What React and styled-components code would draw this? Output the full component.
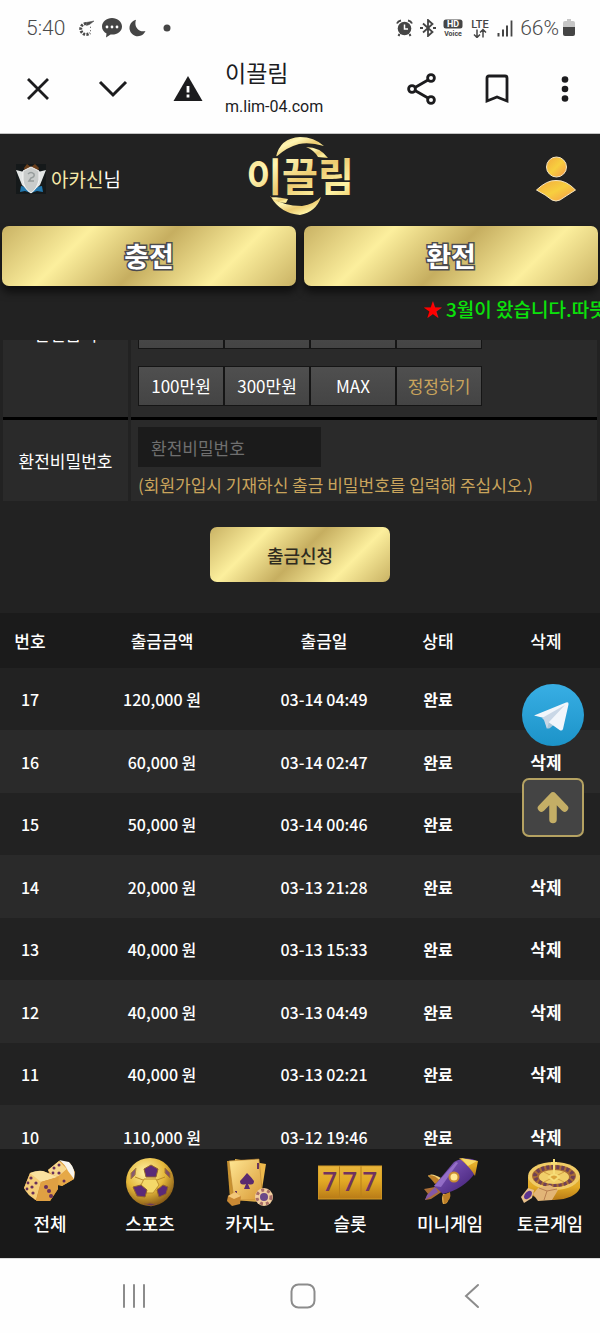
import React, { useLayoutEffect, useRef } from "react";
import styled, { createGlobalStyle, css } from "styled-components";

const sans = `"Noto Sans CJK KR", "Noto Sans", sans-serif`;
const ui = `Roboto, "Noto Sans CJK KR", sans-serif`;
const gold = `linear-gradient(135deg, #c9b264 0%, #fcef9d 26%, #c6ae60 50%, #fcef9d 75%, #c9b264 100%)`;

const Global = createGlobalStyle`
  *, *::before, *::after { box-sizing: border-box; }
  body { margin: 0; background: #222; font-family: ${sans}; }
  button, input { font-family: inherit; }
  button { margin: 0; padding: 0; border: 0; background: none; color: inherit; cursor: pointer; }
  a { color: inherit; text-decoration: none; }
  svg { display: block; flex: none; }
`;

const Screen = styled.div`
  display: flex;
  flex-direction: column;
  height: 100vh;
  overflow: hidden;
  background: #222;
  color: #fff;
`;

/* ---------- phone chrome ---------- */
const StatusBar = styled.div`
  display: flex;
  align-items: center;
  justify-content: space-between;
  flex: none;
  height: 56px;
  padding: 0 25px 0 26px;
  background: #fefefe;
  color: #4a4a4a;
  font: 400 21px/24px ${ui};
`;
const StatusGroup = styled.div`
  display: flex;
  align-items: center;
  gap: ${(p) => p.$gap}px;
`;
const Light = styled.span`
  font-weight: 300;
  -webkit-text-stroke: 0;
`;
const BrowserBar = styled.header`
  display: flex;
  align-items: center;
  flex: none;
  height: 78px;
  padding: 0 4px 12px 0;
  background: #fefefe;
  color: #1c1c1e;
  border-bottom: 1px solid #c4c4c4;
`;
const BarButton = styled.button`
  display: grid;
  place-items: center;
  flex: none;
  width: ${(p) => p.$width || 75}px;
  height: 48px;
`;
const PageTitle = styled.div`
  flex: 1;
  min-width: 0;
  font-family: ${ui};
`;
const TitleText = styled.div`
  font-size: 23px;
  line-height: 32px;
`;
const TitleUrl = styled.div`
  font-size: 16px;
  line-height: 24px;
  padding-top: 4px;
`;
const SystemNav = styled.nav`
  display: grid;
  grid-template-columns: repeat(3, 1fr);
  place-items: center;
  flex: none;
  height: 75px;
  padding: 0 44px 0 50px;
  background: #fefefe;
  color: #8c8c8c;
  border-top: 1px solid #dcdcdc;
`;

/* ---------- site header ---------- */
const SiteHeader = styled.header`
  display: grid;
  grid-template-columns: 1fr auto 1fr;
  align-items: center;
  flex: none;
  height: 90px;
  padding: 0 24px 0 16px;
`;
const Member = styled.div`
  display: flex;
  align-items: center;
  gap: 5px;
  font-size: 19px;
  line-height: 28px;
  font-weight: 400;
`;
const MemberName = styled.span`
  color: #f6e9a8;
`;
const LogoLink = styled.a`
  padding-left: 8px;
`;
const ProfileButton = styled.button`
  justify-self: end;
`;
const CashActions = styled.div`
  display: flex;
  gap: 8px;
  flex: none;
  padding: 2px 2px 0;
`;
const GoldButton = styled.button`
  border-radius: 7px;
  background: ${gold};
  ${(p) =>
    p.$large
      ? css`
          flex: 1;
          height: 60px;
          color: #fff;
          font-size: 27px;
          font-weight: 700;
          line-height: 32px;
          -webkit-text-stroke: 3px #4b4b50;
          paint-order: stroke fill;
          box-shadow: 0 6px 9px rgba(0, 0, 0, 0.6);
        `
      : css`
          width: 180px;
          height: 55px;
          color: #2e2b20;
          font-size: 18px;
          font-weight: 500;
        `}
`;
const Ticker = styled.div`
  flex: none;
  height: 54px;
  padding: 9px 0 0 423px;
  overflow: hidden;
  white-space: nowrap;
  color: #0be20b;
  font-size: 19px;
  font-weight: 500;
  line-height: 28px;
`;
const Star = styled.span`
  color: #f00;
  margin-right: 4px;
`;

/* ---------- scrolling content ---------- */
const Content = styled.main`
  flex: 1;
  min-height: 0;
  overflow-y: auto;
  scrollbar-width: none;
`;
const FormRow = styled.div`
  display: grid;
  grid-template-columns: 125px 1fr;
  gap: 3px;
  padding: 0 3px;
`;
const FormLabel = styled.label`
  display: grid;
  place-items: center;
  background: #2a2a2a;
  font-size: 17px;
  line-height: 24px;
  border-bottom: ${(p) => (p.$ruled ? 3 : 0)}px solid #000;
`;
const FormField = styled.div`
  display: flex;
  flex-direction: column;
  justify-content: flex-end;
  height: ${(p) => (p.$ruled ? 169 : 81)}px;
  padding: ${(p) => (p.$ruled ? "0 7px 11px" : "0 7px 2px")};
  background: #2a2a2a;
  border-bottom: ${(p) => (p.$ruled ? 3 : 0)}px solid #000;
`;
const AmountGrid = styled.div`
  display: grid;
  grid-template-columns: repeat(4, 86px);
  row-gap: 17px;
`;
const AmountButton = styled.button`
  height: 40px;
  border: 1px solid #151515;
  background: linear-gradient(#4f4f4f, #444);
  color: ${(p) => (p.$accent ? "#c9a45c" : "#fff")};
  font-size: 17px;
  line-height: 24px;
`;
const PasswordInput = styled.input`
  width: 183px;
  height: 40px;
  padding: 0 13px;
  border: 0;
  border-radius: 0;
  background: #1b1b1b;
  color: #fff;
  font-size: 17px;
  &::placeholder {
    color: #6f6f6f;
    opacity: 1;
  }
`;
const Hint = styled.p`
  margin: 0;
  padding-top: 4px;
  color: #c9a45c;
  font-size: 17px;
  line-height: 28px;
  white-space: nowrap;
`;
const SubmitRow = styled.div`
  display: flex;
  justify-content: center;
  padding: 26px 0 31px;
`;
const History = styled.table`
  width: 100%;
  table-layout: fixed;
  border-collapse: collapse;
  font-size: 16px;
  font-weight: 500;
  line-height: 24px;
  text-align: center;
`;
const HeadCell = styled.th`
  width: ${(p) => p.$width};
  height: 55px;
  padding: 0;
  background: #1b1b1b;
  font-size: 17px;
  font-weight: 500;
`;
const Row = styled.tr`
  height: 62px;
  background: #222;
  &:nth-child(even) {
    height: 63px;
    background: #2a2a2a;
  }
`;
const Cell = styled.td`
  padding: 0;
  font-weight: ${(p) => (p.$strong ? 700 : 500)};
`;
const DeleteButton = styled.button`
  font-size: 17px;
  font-weight: 700;
  line-height: 24px;
`;

/* ---------- floating buttons ---------- */
const SiteBody = styled.div`
  position: relative;
  display: flex;
  flex: 1;
  flex-direction: column;
  min-height: 0;
`;
const Floating = styled.div`
  position: absolute;
  bottom: 312px;
  right: 16px;
  display: flex;
  flex-direction: column;
  gap: 32px;
`;
const TopButton = styled.button`
  display: grid;
  place-items: center;
  width: 62px;
  height: 59px;
  border: 2px solid #b5a262;
  border-radius: 7px;
  background: #444;
`;

/* ---------- game tabs ---------- */
const GameNav = styled.nav`
  display: grid;
  grid-template-columns: repeat(6, 1fr);
  flex: none;
  height: 109px;
  padding-top: 8px;
  background: #191919;
`;
const GameLink = styled.a`
  display: flex;
  flex-direction: column;
  align-items: center;
  gap: 2px;
  font-size: 18px;
  font-weight: 500;
  line-height: 28px;
  white-space: nowrap;
`;

/* ---------- icons ---------- */
const GestureIcon = () => (
  <svg width="18" height="18" viewBox="0 0 18 18" fill="none" stroke="#4a4a4a">
    <path d="M9 4.5A5.5 5.5 0 1 0 13 14" strokeWidth="3" strokeDasharray="2.2 1.2" />
    <path d="M9 3.5 17 2 12.5 5.5 9.5 6.5Z" fill="#4a4a4a" strokeWidth=".5" />
    <path d="M13 8.5l1-.5M13 11.5l1 .5" />
  </svg>
);
const ChatIcon = () => (
  <svg width="20" height="20" viewBox="0 0 20 20" fill="#454545">
    <path d="M10 0C4.500 0 0 3.700 0 8.500c0 3 1.700 5.500 4.500 7.100L4 19.500l4.600-3c6.500.6 11.400-3 11.400-8C20 3.700 15.500 0 10 0Z" />
    <g fill="#fff"><circle cx="5" cy="9" r="1.400" /><circle cx="10" cy="9" r="1.400" /><circle cx="15" cy="9" r="1.400" /></g>
  </svg>
);
const MoonIcon = () => (
  <svg width="17" height="18" viewBox="0 0 17 18" fill="#454545">
    <path d="M7 .8A8.300 8.300 0 1 0 16.500 12C10 14 4.500 7.500 7 .8Z" />
  </svg>
);
const AlarmIcon = () => (
  <svg width="17" height="18" viewBox="0 0 17 18" fill="none" stroke="#454545">
    <circle cx="8.500" cy="9.500" r="6.800" fill="#454545" stroke="none" />
    <path d="M8.500 5.500v4.500h3.500" stroke="#fff" strokeWidth="1.500" />
    <path d="M1 4.500Q2 2 5 1.500M16 4.500Q15 2 12 1.500M3.500 15l-1 2M13.500 15l1 2" strokeWidth="2" />
  </svg>
);
const BluetoothIcon = () => (
  <svg width="16" height="18" viewBox="0 0 16 18" fill="none" stroke="#454545" strokeWidth="1.800">
    <path d="M3 4.500 12.500 13 8 17V1l4.500 4L3 13.500" />
    <path d="M0 9h3M13 9h3" strokeWidth="2.200" />
  </svg>
);
const VoiceIcon = () => (
  <svg width="20" height="18" viewBox="0 0 20 18" fontFamily="Roboto, sans-serif" fontWeight="700" textAnchor="middle">
    <rect x="0.500" y="0.500" width="19" height="9" rx="2.500" fill="#454545" />
    <text x="10" y="8" fontSize="9" fill="#fff">HD</text>
    <text x="10" y="17" fontSize="7" fill="#454545">Voice</text>
  </svg>
);
const LteIcon = () => (
  <svg width="20" height="19" viewBox="0 0 20 19" fill="#454545" fontFamily="Roboto, sans-serif" textAnchor="middle">
    <text x="10" y="8.500" fontSize="11" fontWeight="500">LTE</text>
    <path d="M7 10.500v8M4 15.500 7 18.500 10 15.500M13 18.500v-8M10 13.500 13 10.500l3 3" fill="none" stroke="#454545" strokeWidth="1.500" />
  </svg>
);
const SignalIcon = () => (
  <svg width="16" height="17" viewBox="0 0 16 17" stroke="#454545" strokeWidth="2">
    <path d="M1.500 13v3.500M6 9.500v7M10 5.500v11" />
    <path d="M14.500.5v16" strokeWidth="1.800" />
  </svg>
);
const BatteryIcon = () => (
  <svg width="12" height="18" viewBox="0 0 12 18">
    <path d="M4 0h4v2h2q2 0 2 2v5H0V4q0-2 2-2h2Z" fill="#c6c6c6" />
    <path d="M0 8h12v7q0 2-2 2H2q-2 0-2-2Z" fill="#454545" />
  </svg>
);
const CloseIcon = () => (
  <svg width="24" height="24" viewBox="0 0 24 24" fill="none" stroke="currentColor" strokeWidth="2.800">
    <path d="M2 2 22 22M22 2 2 22" />
  </svg>
);
const DownIcon = () => (
  <svg width="30" height="18" viewBox="0 0 30 18" fill="none" stroke="currentColor" strokeWidth="3">
    <path d="M2 2 15 15 28 2" />
  </svg>
);
const WarningIcon = () => (
  <svg width="30" height="26" viewBox="0 0 30 26">
    <path d="M15 0 29.500 25H.5Z" fill="currentColor" />
    <path d="M15 10v6.500M15 18.500v3" stroke="#fff" strokeWidth="2.800" />
  </svg>
);
const ShareIcon = () => (
  <svg width="30" height="32" viewBox="0 0 30 32" fill="none" stroke="currentColor" strokeWidth="2.800">
    <path d="M8 14.500 21 7M8 17.500 21 25" />
    <circle cx="5" cy="16" r="3.400" /><circle cx="24" cy="5" r="3.400" /><circle cx="24" cy="27" r="3.400" />
  </svg>
);
const BookmarkIcon = () => (
  <svg width="24" height="30" viewBox="0 0 24 30" fill="none" stroke="currentColor" strokeWidth="2.800">
    <path d="M2 27V4q0-2 2-2h16q2 0 2 2v23L12 23Z" />
  </svg>
);
const MoreIcon = () => (
  <svg width="8" height="28" viewBox="0 0 8 28" fill="currentColor">
    <circle cx="4" cy="4.500" r="3.300" /><circle cx="4" cy="14" r="3.300" /><circle cx="4" cy="23.500" r="3.300" />
  </svg>
);
const ShieldBadge = () => (
  <svg width="30" height="30" viewBox="0 0 30 30">
    <rect width="30" height="30" fill="#15191a" />
    <path d="M8 4 11 0l4 3 4-3 4 4-2 5H9Z" fill="#6a3f1c" />
    <path d="M5 22l5 1 5 3 5-3 6-1 1 6-6-1-6 2-6-2-5 1Z" fill="#2277ad" />
    <path d="M0 6 8 8 15 29 6 21ZM30 6l-8 2-7 21 9-8Z" fill="#e2e5e4" />
    <path d="M15 3 23 7v9q-2 9-8 13Q8 25 7 16V7Z" fill="#c9cccb" stroke="#f4f4f4" />
    <path d="M12 10q3-3 6 0 1 3-3 4l-2 3h5" fill="none" stroke="#969c9c" strokeWidth="1.500" />
  </svg>
);
const Logo = () => (
  <svg width="108" height="84" viewBox="0 4 108 84" role="img" aria-label="이끌림">
    <defs>
      <linearGradient id="logoGold" x1="0" y1="0" x2="1" y2="1">
        <stop offset="0" stopColor="#f0cf72" /><stop offset=".3" stopColor="#fff6b4" />
        <stop offset=".55" stopColor="#eccb70" /><stop offset=".8" stopColor="#fff4a6" /><stop offset="1" stopColor="#e9c65c" />
      </linearGradient>
    </defs>
    <g fill="url(#logoGold)">
      <path d="M30 24Q34 5 54 4 68 4 78 13 64 9 53 11 41 14 30 24Z" />
      <path d="M60 14Q74 14 82 25L72 24Q68 17 60 14Z" />
      <path d="M25 64Q37 73 56 73 68 71 75 64 70 79 54 82 34 80 25 64Z" />
      <path d="M24 63 42 66 40 70Q30 70 24 63Z" />
    </g>
    <text x="54" y="58" textAnchor="middle" fontFamily='"Noto Sans CJK KR", sans-serif' fontSize="39" fontWeight="700"
      fill="url(#logoGold)" stroke="#222" strokeWidth="4" paintOrder="stroke">이끌림</text>
  </svg>
);
const ProfileIcon = () => (
  <svg width="40" height="46" viewBox="0 0 40 46">
    <defs>
      <linearGradient id="person" x1="0" y1="0" x2="1" y2="1">
        <stop offset="0" stopColor="#f3a83e" /><stop offset=".5" stopColor="#f7cf3f" /><stop offset="1" stopColor="#f5954a" />
      </linearGradient>
    </defs>
    <g fill="url(#person)" stroke="#f6e6c2" strokeWidth="1">
      <circle cx="20.500" cy="11" r="10" />
      <path d="M.5 34Q11 24 20 24.500 30 24 39.500 34 30 40 24 44q-4 2-8 0Q10 39 .5 34Z" />
    </g>
  </svg>
);
const TelegramIcon = () => (
  <svg width="62" height="62" viewBox="0 0 62 62">
    <defs>
      <linearGradient id="tg" x1="0" y1="0" x2="0" y2="1">
        <stop offset="0" stopColor="#38aee4" /><stop offset="1" stopColor="#1c93c8" />
      </linearGradient>
    </defs>
    <circle cx="31" cy="31" r="31" fill="url(#tg)" />
    <path d="M22 34 25 44q1 1 3 0l6-5Z" fill="#a9c6d8" />
    <path d="M12 31.500 44 18.500q3-1 2.500 2L41 45q-1 2.500-3.500 1L27 38.500 22 34Z" fill="#f2f6fb" />
    <path d="M20 34 43 21 27 38l-2 7-3-9Z" fill="#c9d7e6" />
  </svg>
);
const UpArrowIcon = () => (
  <svg width="32" height="34" viewBox="0 0 32 34" fill="none" stroke="#c4ae66" strokeWidth="7.500" strokeLinecap="round" strokeLinejoin="round">
    <path d="M16 28.500V7M4.500 17 16 5 27.500 17" />
  </svg>
);
const RecentsIcon = () => (
  <svg width="24" height="26" viewBox="0 0 24 26" stroke="currentColor" strokeWidth="2" strokeLinecap="round">
    <path d="M2 2v22M12 2v22M22 2v22" />
  </svg>
);
const HomeIcon = () => (
  <svg width="26" height="26" viewBox="0 0 26 26" fill="none" stroke="currentColor" strokeWidth="2">
    <rect x="1.500" y="1.500" width="23" height="23" rx="7" />
  </svg>
);
const BackIcon = () => (
  <svg width="16" height="26" viewBox="0 0 16 26" fill="none" stroke="currentColor" strokeWidth="2" strokeLinecap="round">
    <path d="M14 2 2 13 14 24" />
  </svg>
);

const iconDefs = (
  <defs>
    <linearGradient id="g1" x1="0" y1="0" x2="1" y2="1"><stop offset="0" stopColor="#ffe794" /><stop offset="1" stopColor="#d99a36" /></linearGradient>
    <linearGradient id="g2" x1="0" y1="0" x2="0" y2="1"><stop offset="0" stopColor="#e8b53c" /><stop offset=".45" stopColor="#e2aa25" /><stop offset="1" stopColor="#b87a17" /></linearGradient>
    <radialGradient id="g3" cx=".4" cy=".3" r=".75"><stop offset="0" stopColor="#fff2a8" /><stop offset=".55" stopColor="#e5b83a" /><stop offset="1" stopColor="#7d5013" /></radialGradient>
    <linearGradient id="g4" x1="0" y1="0" x2="1" y2="1"><stop offset="0" stopColor="#8b62c6" /><stop offset="1" stopColor="#3c1b70" /></linearGradient>
  </defs>
);
const Dice = () => (
  <>
    <path d="M25 13 36 4 47 6 52 15 51 22 39 29 29 27Z" fill="#e0a040" />
    <path d="M25 13 36 4 44 12 36 19 31 20Z" fill="#f8d88e" />
    <path d="M36 19 44 12 51 22 39 29 35 27Z" fill="#e6a947" />
    <path d="M36 3 46 5Q53 12 51 22L45 14Q42 7 36 3Z" fill="#f7f5ee" />
    <path d="M7 16 20 14 35 20 35 32 27 44 12 43 1 31Z" fill="#cf8a33" />
    <path d="M7 16Q13 14 18 25L13 43Q4 38 1 31Z" fill="#f5cd79" />
    <path d="M7 16Q14 13 20 14L35 20 18 25Z" fill="#fae2a0" />
    <path d="M18 25 35 20V32L27 44H13Z" fill="#dfa043" />
    <g fill="#69305b">
      <circle cx="8" cy="21" r="1.600" /><circle cx="13" cy="26" r="1.600" /><circle cx="5" cy="26" r="1.400" /><circle cx="9" cy="30" r="1.600" /><circle cx="4" cy="32" r="1.400" /><circle cx="10" cy="36" r="1.600" />
      <circle cx="23" cy="30" r="2" /><circle cx="26" cy="34" r="2" /><circle cx="28" cy="39" r="2" />
      <circle cx="31" cy="11" r="1.500" /><circle cx="36" cy="8" r="1.500" /><circle cx="30" cy="16" r="1.400" /><circle cx="36" cy="16" r="1.600" /><circle cx="41" cy="24" r="1.500" />
    </g>
  </>
);
const Ball = () => (
  <>
    <circle cx="24" cy="25" r="24" fill="url(#g3)" />
    <path d="M24 18v-6M17 23 9 20M31 23l8-3M20 28l-5 6M29 28l5 6" stroke="#b98a28" fill="none" />
    <path d="M18 22h12l3 6-6 8h-7l-5-8Z" fill="#f4d869" stroke="#bd9030" />
    <g fill="#5b2a77" stroke="#92602b">
      <path d="M18 12 25 8l7 4-2 8H20Z" /><path d="M7 30l8-2 6 5-2 7-8-1Z" /><path d="m31 33 6-5 5 2-2 7-7 3Z" />
      <path d="M5 16 10 11l-1 7-4 4ZM39 11l5 5v5l-5-5ZM18 47l6-1 7 1-6 2Z" opacity=".7" />
    </g>
  </>
);
const Cards = () => (
  <>
    <path d="M1 4 19 3l3 37-18 2Z" fill="#c89230" /><path d="M9 2 40 7 34 45 8 43Z" fill="#edb94c" />
    <path d="M3 4 33 2 37 43 8 43Z" fill="url(#g1)" stroke="#b9822f" strokeWidth=".6" />
    <path d="M21 16q5 5 7 8 0 5-6 3l2 5h-6l2-5q-6 2-6-3 3-3 7-8Z" fill="#5a2b6f" />
    <path d="M32 6v6M10 34v5" stroke="#6a365c" strokeWidth="2" />
    <path d="M2 39 9 35l6 4-1 8-8 2-5-5Z" fill="#ca8934" /><path d="m2 39 7-4 6 4-7 3Z" fill="#f3c779" />
    <circle cx="38" cy="40" r="9" fill="#f2cfa0" /><circle cx="38" cy="40" r="7" fill="none" stroke="#a76d68" strokeWidth="3" strokeDasharray="3 3" />
    <circle cx="38" cy="40" r="4" fill="#6b4988" />
  </>
);
const Slots = () => (
  <>
    <rect y="9" width="64" height="33" fill="url(#g2)" />
    <path d="M21.500 9v33M43 9v33" stroke="#ba801a" />
    <path d="M0 9h64v33H0Z" fill="none" stroke="#d49c27" />
    <g fill="#70345e" fontFamily="Roboto, sans-serif" fontWeight="500" fontSize="26" textAnchor="middle">
      <text x="12" y="34">7</text><text x="32" y="34">7</text><text x="52" y="34">7</text>
    </g>
  </>
);
const Rocket = () => (
  <>
    <path d="M19 21Q9 15 6 19l8 7ZM27 37q0 11-6 10-2-5 0-10Z" fill="url(#g1)" />
    <path d="M6 18q7-1 12 6l-5 3ZM21 38l7-3q2 8-6 12Z" fill="#bd7f28" />
    <path d="M13 30 2 32l4 5-3 6 6-1 12-8Z" fill="#aa6e37" /><path d="M13 30 5 38l-2 5 13-8Z" fill="#8458a6" />
    <path d="M12 29 32 5Q40 0 50 2l5 2-2 12Q42 32 21 37Z" fill="url(#g4)" />
    <path d="M37 1 56 4 53 19Q49 11 37 1Z" fill="url(#g2)" /><path d="M39 1 55 4 46 9Z" fill="#f6d969" />
    <path d="M12 29 34 5l2 1L19 30Z" fill="#9d78cf" opacity=".8" />
    <circle cx="32" cy="20" r="4.500" fill="#ffe994" stroke="#c88b31" strokeWidth="2" />
  </>
);
const Roulette = () => (
  <>
    <path d="M8 20v13q3 10 26 10 21-1 26-12V19Z" fill="url(#g2)" />
    <ellipse cx="34" cy="19" rx="26" ry="14" fill="#f0cb66" /><ellipse cx="34" cy="19" rx="22" ry="11" fill="#a86c35" />
    <ellipse cx="34" cy="19" rx="19" ry="9" fill="none" stroke="#704054" strokeWidth="4" strokeDasharray="3 2" />
    <ellipse cx="34" cy="20" rx="15" ry="7" fill="#f1cf69" /><path d="M24 15l20 10M44 15 24 25" stroke="#d3a143" />
    <path d="M34 2v16M31 6h6M29 20q5-5 10 0l-5 4Z" stroke="#f6dd78" strokeWidth="2" fill="#dba33b" />
    <path d="m18 31 12-3 8 5-6 10-14 1-5-7Z" fill="#e2b577" /><path d="m19 31 8 3 10-2M27 34l-3 9" stroke="#b98050" fill="none" />
    <path d="m1 40 7-9 6 2-2 8-8 5Z" fill="#e8c08c" /><ellipse cx="8" cy="38" rx="3" ry="5" transform="rotate(40 8 38)" fill="#5c3590" />
  </>
);

const games = [
  { label: "전체", Icon: Dice, box: "0 0 54 50", width: 54 },
  { label: "스포츠", Icon: Ball, box: "0 0 48 50", width: 48 },
  { label: "카지노", Icon: Cards, box: "0 0 48 50", width: 48 },
  { label: "슬롯", Icon: Slots, box: "0 0 64 50", width: 64 },
  { label: "미니게임", Icon: Rocket, box: "0 0 57 50", width: 57 },
  { label: "토큰게임", Icon: Roulette, box: "0 0 60 50", width: 60 },
];

const columns = [
  ["번호", "10%"],
  ["출금금액", "34%"],
  ["출금일", "20%"],
  ["상태", "18%"],
  ["삭제", "18%"],
];

const withdrawals = [
  [17, "120,000", "03-14 04:49"],
  [16, "60,000", "03-14 02:47"],
  [15, "50,000", "03-14 00:46"],
  [14, "20,000", "03-13 21:28"],
  [13, "40,000", "03-13 15:33"],
  [12, "40,000", "03-13 04:49"],
  [11, "40,000", "03-13 02:21"],
  [10, "110,000", "03-12 19:46"],
];

const SCROLLED_BY = 89;

export default function App() {
  const content = useRef(null);
  useLayoutEffect(() => {
    content.current.scrollTop = SCROLLED_BY;
  }, []);

  return (
    <Screen>
      <Global />
      <StatusBar>
        <StatusGroup $gap={17}>
          <StatusGroup $gap={12}>
            <Light>5:40</Light>
            <StatusGroup $gap={7}>
              <GestureIcon />
              <ChatIcon />
              <MoonIcon />
            </StatusGroup>
          </StatusGroup>
          <svg width="8" height="8" viewBox="0 0 8 8"><circle cx="4" cy="4" r="3.500" fill="#454545" /></svg>
        </StatusGroup>
        <StatusGroup $gap={7}>
          <AlarmIcon />
          <BluetoothIcon />
          <VoiceIcon />
          <LteIcon />
          <SignalIcon />
          <StatusGroup $gap={4}>
            <Light>66%</Light>
            <BatteryIcon />
          </StatusGroup>
        </StatusGroup>
      </StatusBar>

      <BrowserBar>
        <BarButton aria-label="닫기"><CloseIcon /></BarButton>
        <BarButton aria-label="내리기"><DownIcon /></BarButton>
        <BarButton aria-label="보안 경고"><WarningIcon /></BarButton>
        <PageTitle>
          <TitleText>이끌림</TitleText>
          <TitleUrl>m.lim-04.com</TitleUrl>
        </PageTitle>
        <BarButton aria-label="공유"><ShareIcon /></BarButton>
        <BarButton aria-label="북마크"><BookmarkIcon /></BarButton>
        <BarButton aria-label="더보기" $width={62}><MoreIcon /></BarButton>
      </BrowserBar>

      <SiteHeader>
        <Member>
          <ShieldBadge />
          <div><MemberName>아카신</MemberName>님</div>
        </Member>
        <LogoLink href="#home"><Logo /></LogoLink>
        <ProfileButton aria-label="내 정보"><ProfileIcon /></ProfileButton>
      </SiteHeader>
      <CashActions>
        <GoldButton $large>충전</GoldButton>
        <GoldButton $large>환전</GoldButton>
      </CashActions>
      <SiteBody>
        <Ticker><Star>★</Star>3월이 왔습니다.따뜻</Ticker>
        <Content ref={content}>
          <FormRow>
            <FormLabel as="div" $ruled>환전금액</FormLabel>
            <FormField $ruled>
              <AmountGrid>
                <AmountButton aria-label="1만원" />
                <AmountButton aria-label="5만원" />
                <AmountButton aria-label="10만원" />
                <AmountButton aria-label="50만원" />
                <AmountButton>100만원</AmountButton>
                <AmountButton>300만원</AmountButton>
                <AmountButton>MAX</AmountButton>
                <AmountButton $accent>정정하기</AmountButton>
              </AmountGrid>
            </FormField>
          </FormRow>
          <FormRow>
            <FormLabel htmlFor="withdraw-password">환전비밀번호</FormLabel>
            <FormField>
              <PasswordInput id="withdraw-password" type="password" placeholder="환전비밀번호" />
              <Hint>(회원가입시 기재하신 출금 비밀번호를 입력해 주십시오.)</Hint>
            </FormField>
          </FormRow>
          <SubmitRow>
            <GoldButton>출금신청</GoldButton>
          </SubmitRow>
          <History>
            <thead>
              <tr>
                {columns.map(([name, width]) => (
                  <HeadCell key={name} scope="col" $width={width}>{name}</HeadCell>
                ))}
              </tr>
            </thead>
            <tbody>
              {withdrawals.map(([id, amount, date]) => (
                <Row key={id}>
                  <Cell>{id}</Cell>
                  <Cell>{amount} 원</Cell>
                  <Cell>{date}</Cell>
                  <Cell $strong>완료</Cell>
                  <Cell><DeleteButton>삭제</DeleteButton></Cell>
                </Row>
              ))}
            </tbody>
          </History>
        </Content>
        <Floating>
          <a href="#telegram" aria-label="텔레그램"><TelegramIcon /></a>
          <TopButton aria-label="맨 위로"><UpArrowIcon /></TopButton>
        </Floating>
      </SiteBody>

      <GameNav>
        {games.map(({ label, Icon, box, width }) => (
          <GameLink key={label} href={`#${label}`}>
            <svg width={width} height="50" viewBox={box}>{iconDefs}<Icon /></svg>
            {label}
          </GameLink>
        ))}
      </GameNav>

      <SystemNav>
        <button aria-label="최근 앱"><RecentsIcon /></button>
        <button aria-label="홈"><HomeIcon /></button>
        <button aria-label="뒤로"><BackIcon /></button>
      </SystemNav>
    </Screen>
  );
}
